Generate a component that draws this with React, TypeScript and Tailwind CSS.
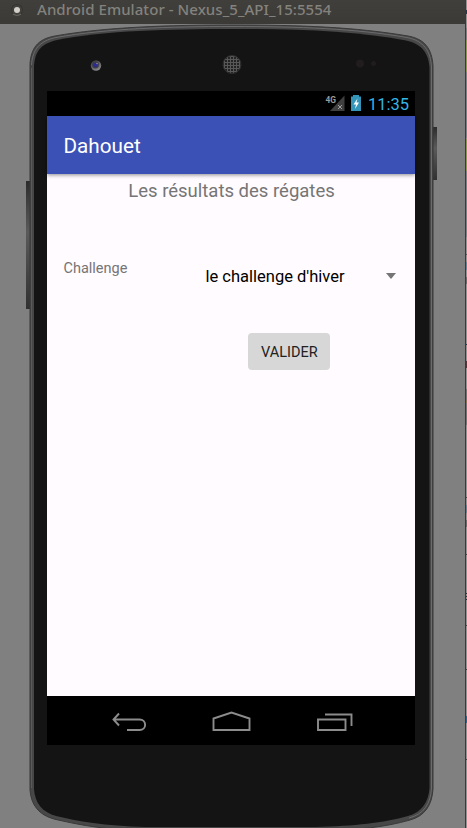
const edgeMarks = [
  { y: 10, h: 4, c: '#25394b' },
  { y: 28, h: 12, c: '#808080' },
  { y: 40, h: 32, c: '#8b9750' },
  { y: 72, h: 66, c: '#7b8184' },
  { y: 139, h: 32, c: '#8b9750' },
  { y: 171, h: 66, c: '#7b8184' },
  { y: 254, h: 1, c: '#55595c' },
  { y: 262, h: 8, c: '#63869b' },
  { y: 277, h: 7, c: '#6b6b6b' },
  { y: 344, h: 1, c: '#1d3c55' },
  { y: 361, h: 7, c: '#50383a' },
  { y: 400, h: 3, c: '#8c7350' },
  { y: 389, h: 11, c: '#747474' },
  { y: 403, h: 22, c: '#747474' },
  { y: 497, h: 1, c: '#4b4b4b' },
  { y: 505, h: 8, c: '#687f8d' },
  { y: 520, h: 7, c: '#6b6b6b' },
  { y: 554, h: 1, c: '#444444' },
  { y: 593, h: 1, c: '#24323b' },
  { y: 596, h: 1, c: '#24323b' },
  { y: 599, h: 1, c: '#24323b' },
  { y: 625, h: 1, c: '#444444' },
  { y: 669, h: 1, c: '#444444' },
  { y: 716, h: 7, c: '#2d6387' },
  { y: 759, h: 1, c: '#444444' },
]

function DeviceBody() {
  return (
    <svg className="absolute inset-0" width="465" height="804" viewBox="0 24 465 804" fill="none">
      <defs>
        <linearGradient id="key" x1="0" y1="0" x2="0" y2="1">
          <stop offset="0" stopColor="#2b2b2b" />
          <stop offset="0.2" stopColor="#444444" />
          <stop offset="0.4" stopColor="#5a5a5a" />
          <stop offset="0.7" stopColor="#454545" />
          <stop offset="1" stopColor="#303030" />
        </linearGradient>
        <linearGradient id="ring" x1="0" y1="0" x2="0.5" y2="1">
          <stop offset="0" stopColor="#333333" />
          <stop offset="1" stopColor="#858585" />
        </linearGradient>
        <pattern id="mesh" width="3" height="3" patternUnits="userSpaceOnUse">
          <rect width="3" height="3" fill="#585858" />
          <rect width="2" height="2" fill="#242424" />
        </pattern>
      </defs>
      <rect x="26" y="181" width="5" height="128" fill="url(#key)" />
      <rect x="432" y="127" width="5" height="53" fill="url(#key)" />
      <path
        d="M30 64C31 49 37 39 55 36C105 27 170 25 232 25C300 25 355 27 408 36C425 39 432 49 433 66V789C432 805 425 816 410 820C385 827 360 830 320 831H143C105 830 75 824 54 819C39 815 31 805 30 790Z"
        fill="#474747"
        stroke="#393939"
      />
      <path
        d="M31.5 65C32.5 50 39 41 56 37.500C106 28.500 170 26.500 232 26.500C300 26.500 355 28.500 407 37.500C424 41 430.500 51 431.500 67V788C430.500 804 424 814 409 818"
        stroke="#6b6b6e"
      />
      <path d="M31.500 68V788" stroke="#606060" strokeWidth="0.800" />
      <path
        d="M34 66C35 52 40 44 57 40C105 30.500 170 29 232 29C300 29 355 31 406 40.500C422 44 428.500 53 429.500 68V788C428.500 802 422 812 408 816C383 823 355 826 315 827H145C106 826 76 821 56 816C42 812 35 803 34 789Z"
        fill="#141414"
      />
      <circle cx="96" cy="65.500" r="5.200" fill="url(#ring)" />
      <circle cx="95.500" cy="65" r="3.400" fill="#3c3c4c" />
      <circle cx="95.500" cy="65" r="2" fill="#2a2a90" />
      <circle cx="97" cy="63.500" r="0.800" fill="#8c8c98" />
      <circle cx="232" cy="64.500" r="9" fill="url(#mesh)" stroke="#303030" />
      <circle cx="360" cy="63.500" r="4" fill="#211c1d" />
      <circle cx="373.500" cy="63.500" r="2.500" fill="#211c1d" />
    </svg>
  )
}

function StatusBar() {
  return (
    <div className="flex h-[25px] items-center justify-end bg-black pr-1.5">
      <svg width="40" height="25" viewBox="324 91 40 25" className="mr-1">
        <text x="325.500" y="102.500" fontSize="9" fontWeight="700" fill="#9b9b9b" fontFamily="Roboto, sans-serif" textLength="10.500" lengthAdjust="spacingAndGlyphs">4G</text>
        <path d="M344.500 95.500V111H330Z" fill="#404040" />
        <path d="M338 105L342 109M342 105L338 109" stroke="#a0a0a0" strokeWidth="1" />
        <path d="M353 95h6v1.500h2V111h-10V96.500h2z" fill="#3595b9" />
        <path d="M357.500 98.500L353.500 104.500H356L355 109L359 102.500H356.500Z" fill="#fff" />
      </svg>
      <span className="pt-[2px] text-[16.500px] leading-[24px] text-[#33b5e5]">11:35</span>
    </div>
  )
}

function NavBar() {
  return (
    <div className="h-[49px] bg-black">
      <svg width="368" height="49" viewBox="47 696 368 49" fill="none" stroke="#8c8c8c" strokeWidth="1.900">
        <path d="M119 713.500L113.500 719.500L119 725.500M113.500 719.500H139.500C147 719.500 147 730 139.500 730H127" />
        <path d="M213.500 730V718.500L231.500 712.500L249.500 718.500V730Z" />
        <path d="M318 719.500H345.500V730H318ZM325 714.500H351.500V726" />
      </svg>
    </div>
  )
}

export default function App() {
  return (
    <div className="flex h-[828px] w-[467px] overflow-hidden bg-[#808080] [font-family:Roboto,sans-serif]">
      <div className="w-[465px] shrink-0">
        <header className="flex h-6 items-center bg-gradient-to-b from-[#403f3b] to-[#3b3a36]">
          <span className="-mt-1 ml-[11px] flex size-3 shrink-0 items-center justify-center rounded-full border border-[#353430] border-b-[#66655f] bg-[#42413d]">
            <span className="size-[6px] rounded-full bg-[#d2cfc9]" />
          </span>
          <h1 className="-mt-1.5 ml-[14px] whitespace-nowrap text-[15px] font-medium leading-5 tracking-[0.060px] text-[#84827d] [font-family:'Noto_Sans',sans-serif]">
            Android Emulator - Nexus_5_API_15:5554
          </h1>
        </header>
        <div className="relative h-[804px] pl-[47px] pt-[67px]">
          <DeviceBody />
          <main className="relative w-[368px] bg-[#fffbff]">
            <StatusBar />
            <div className="flex h-[57.500px] items-center bg-[#3b51b5] pl-[16.500px] pt-[3px] text-[20.700px] text-white shadow-[0_1px_4px_rgba(0,0,0,0.45)]">
              <span>Dahouet</span>
            </div>
            <section className="h-[522.500px]">
              <h2 className="pl-px pt-[3px] text-center text-[18.500px] leading-7 text-[#757575]">Les résultats des régates</h2>
              <div className="mt-[51.500px] flex h-[46px] pl-[16.500px]">
                <label className="w-[142px] pt-[3px] text-[14.500px] leading-5 text-[#757575]">Challenge</label>
                <div className="flex h-9 w-[190px] items-center justify-between pt-1">
                  <span className="pt-[2px] text-[16.500px] text-black">le challenge d'hiver</span>
                  <svg width="10" height="6" viewBox="0 0 10 6" className="-mt-px"><path d="M0 0H10L5 6Z" fill="#757575" /></svg>
                </div>
              </div>
              <button className="ml-[201.400px] mt-[31px] h-[37px] w-[82px] rounded-sm bg-[#d7d7d7] pt-[2px] text-[14.500px] text-[#212121]">VALIDER</button>
            </section>
            <NavBar />
          </main>
        </div>
      </div>
      <div className="w-px shrink-0 bg-[#3a3a3a]" />
      <svg width="1" height="828" className="shrink-0 bg-[#929292]">
        {edgeMarks.map((m) => <rect key={m.y} y={m.y} width="1" height={m.h} fill={m.c} />)}
      </svg>
    </div>
  )
}
